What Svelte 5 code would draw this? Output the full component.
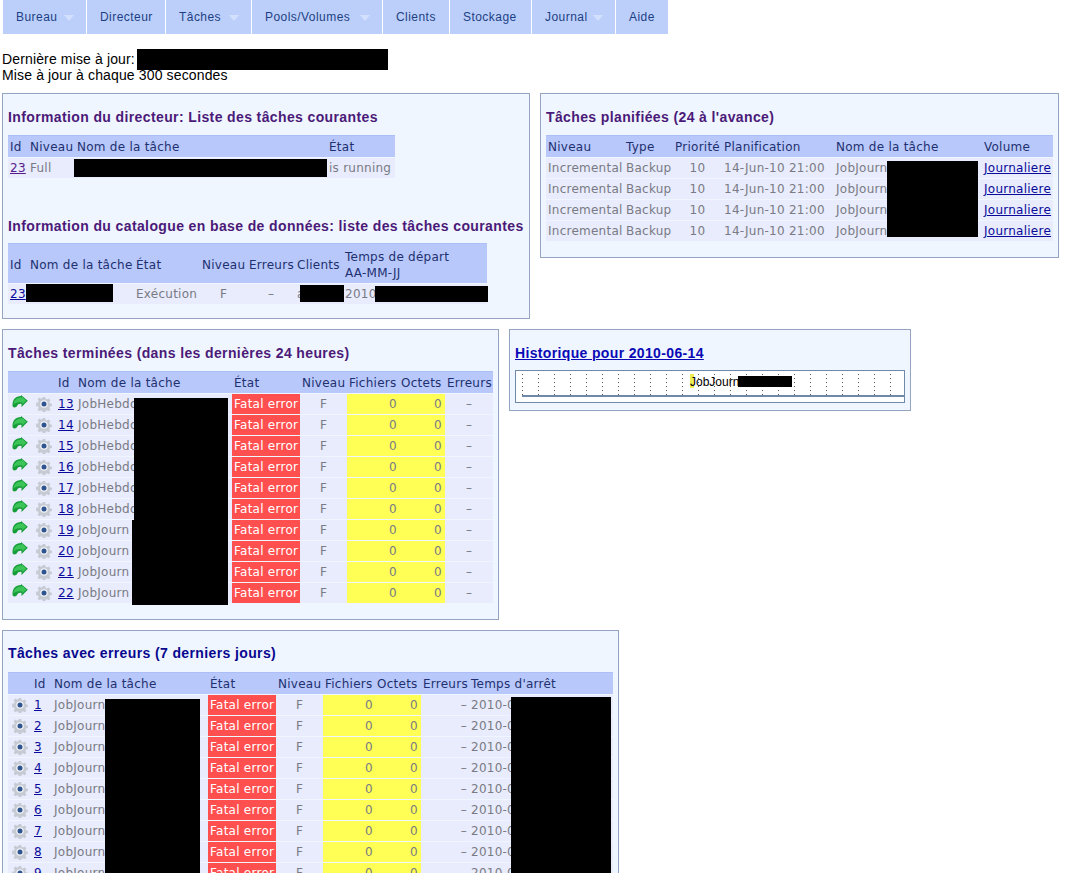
<script>
  const menu = [
    { label: 'Bureau', arrow: true, w: 84 },
    { label: 'Directeur', w: 79 },
    { label: 'Tâches', arrow: true, w: 86 },
    { label: 'Pools/Volumes', arrow: true, w: 131 },
    { label: 'Clients', w: 67 },
    { label: 'Stockage', w: 82 },
    { label: 'Journal', arrow: true, w: 84 },
    { label: 'Aide', w: 53 }
  ];

  const planned = [1, 2, 3, 4];
  const finished = [
    [13, 'JobHebdo'], [14, 'JobHebdo'], [15, 'JobHebdo'], [16, 'JobHebdo'], [17, 'JobHebdo'],
    [18, 'JobHebdo'], [19, 'JobJourn'], [20, 'JobJourn'], [21, 'JobJourn'], [22, 'JobJourn']
  ];
  const errors = [1, 2, 3, 4, 5, 6, 7, 8, 9];
  const ticks = Array.from({ length: 24 }, (_, i) => i);
</script>

{#snippet rerun()}
  <svg class="icon" viewBox="0 0 16 13" width="16" height="13" aria-hidden="true">
    <path d="M.5 10.500C.5 4.500 3.500 1 9 1V0l6.800 5.800L9.500 12V9C7.500 8.500 6 9.200 5.200 10.800 4 13.200.5 13 .5 10.500z" fill="#169c38"/>
    <path d="M1.500 9.500C2 5 4.500 2.500 10 2.500V1.500l4.300 4.200-4 3.600V7.500C7 6.800 4 7 1.500 9.500z" fill="#3cc458"/>
  </svg>
{/snippet}

{#snippet gear()}
  <svg class="icon gear" viewBox="0 0 16 16" width="16" height="16" aria-hidden="true">
    <path d="M6.800 1h2.400l.4 2 1.400.6 1.700-1.100 1.700 1.700-1.100 1.700.6 1.400 2 .4v2.400l-2 .4-.6 1.400 1.100 1.700-1.700 1.700-1.700-1.100-1.400.6-.4 2H6.800l-.4-2-1.400-.6-1.700 1.100-1.700-1.700 1.100-1.700-.6-1.400-2-.4V6.800l2-.4.6-1.400-1.100-1.700 1.700-1.700 1.700 1.100 1.400-.6z" fill="#c6cad2"/>
    <circle cx="8" cy="8" r="3.800" fill="#f0f2f6"/>
    <circle cx="8" cy="8" r="2.500" fill="#2f5590"/>
  </svg>
{/snippet}

<div class="page">
  <nav class="menu">
    {#each menu as item}
      <a href="#top" class="menu-item" style="width: {item.w}px">
        {item.label}
        {#if item.arrow}<span class="arrow"></span>{/if}
      </a>
    {/each}
  </nav>

  <p class="status">
    Dernière mise à jour:<br />
    Mise à jour à chaque 300 secondes
    <span class="mask status-mask"></span>
  </p>

  <div class="row">
    <section class="box box-director">
      <h3>Information du directeur: Liste des tâches courantes</h3>
      <table style="width: 387px">
        <colgroup><col style="width: 20px" /><col style="width: 47px" /><col style="width: 252px" /><col style="width: 68px" /></colgroup>
        <thead><tr><th>Id</th><th>Niveau</th><th>Nom de la tâche</th><th>État</th></tr></thead>
        <tbody><tr><td><a class="visited" href="#top">23</a></td><td>Full</td><td></td><td>is running</td></tr></tbody>
      </table>
      <h3 class="second">Information du catalogue en base de données: liste des tâches courantes</h3>
      <table style="width: 479px">
        <colgroup><col style="width: 20px" /><col style="width: 106px" /><col style="width: 66px" /><col style="width: 47px" /><col style="width: 48px" /><col style="width: 48px" /><col style="width: 144px" /></colgroup>
        <thead>
          <tr class="tall"><th>Id</th><th>Nom de la tâche</th><th>État</th><th>Niveau</th><th>Erreurs</th><th>Clients</th><th>Temps de départ<br />AA-MM-JJ</th></tr>
        </thead>
        <tbody>
          <tr><td><a href="#top">23</a></td><td></td><td>Exécution</td><td class="c">F</td><td class="c">–</td><td>a</td><td>2010</td></tr>
        </tbody>
      </table>
      <span class="mask" style="left: 71px; top: 65px; width: 253px; height: 18px"></span>
      <span class="mask" style="left: 23px; top: 190px; width: 87px; height: 18px"></span>
      <span class="mask" style="left: 297px; top: 191px; width: 44px; height: 17px"></span>
      <span class="mask" style="left: 372px; top: 192px; width: 113px; height: 16px"></span>
    </section>

    <section class="box box-planned">
      <h3>Tâches planifiées (24 à l'avance)</h3>
      <table style="width: 507px">
        <colgroup><col style="width: 78px" /><col style="width: 49px" /><col style="width: 49px" /><col style="width: 112px" /><col style="width: 148px" /><col style="width: 71px" /></colgroup>
        <thead><tr><th>Niveau</th><th>Type</th><th>Priorité</th><th>Planification</th><th>Nom de la tâche</th><th>Volume</th></tr></thead>
        <tbody>
          {#each planned as _}
            <tr><td>Incremental</td><td>Backup</td><td class="c">10</td><td>14-Jun-10 21:00</td><td>JobJourn</td><td><a href="#top">Journaliere</a></td></tr>
          {/each}
        </tbody>
      </table>
      <span class="mask" style="left: 346px; top: 67px; width: 91px; height: 76px"></span>
    </section>
  </div>

  <div class="row">
    <section class="box box-finished">
      <h3>Tâches terminées (dans les dernières 24 heures)</h3>
      <table style="width: 485px">
        <colgroup><col style="width: 24px" /><col style="width: 24px" /><col style="width: 20px" /><col style="width: 156px" /><col style="width: 68px" /><col style="width: 47px" /><col style="width: 52px" /><col style="width: 46px" /><col style="width: 48px" /></colgroup>
        <thead><tr><th></th><th></th><th>Id</th><th>Nom de la tâche</th><th>État</th><th>Niveau</th><th>Fichiers</th><th>Octets</th><th>Erreurs</th></tr></thead>
        <tbody>
          {#each finished as [id, name]}
            <tr>
              <td class="ic">{@render rerun()}</td>
              <td class="ic">{@render gear()}</td>
              <td><a href="#top">{id}</a></td>
              <td>{name}</td>
              <td class="fatal">Fatal error</td>
              <td class="c">F</td>
              <td class="warn">0</td>
              <td class="warn oct">0</td>
              <td class="c">–</td>
            </tr>
          {/each}
        </tbody>
      </table>
      <span class="mask" style="left: 131px; top: 68px; width: 94px; height: 122px"></span>
      <span class="mask" style="left: 129px; top: 190px; width: 96px; height: 85px"></span>
    </section>

    <section class="box box-history">
      <h3><a href="#top">Historique pour 2010-06-14</a></h3>
      <div class="chart">
        <div class="ticks">
          {#each ticks as t}<i class="tick"></i>{/each}
        </div>
        <span class="bar"></span>
        <span class="bar-label">JobJourn</span>
        <span class="mask" style="left: 222px; top: 5px; width: 54px; height: 11px"></span>
      </div>
    </section>
  </div>

  <div class="row">
    <section class="box box-errors">
      <h3 class="blue">Tâches avec erreurs (7 derniers jours)</h3>
      <table style="width: 605px">
        <colgroup><col style="width: 24px" /><col style="width: 20px" /><col style="width: 156px" /><col style="width: 68px" /><col style="width: 47px" /><col style="width: 52px" /><col style="width: 46px" /><col style="width: 48px" /><col style="width: 144px" /></colgroup>
        <thead><tr><th></th><th>Id</th><th>Nom de la tâche</th><th>État</th><th>Niveau</th><th>Fichiers</th><th>Octets</th><th>Erreurs</th><th>Temps d'arrêt</th></tr></thead>
        <tbody>
          {#each errors as id}
            <tr>
              <td class="ic">{@render gear()}</td>
              <td><a href="#top">{id}</a></td>
              <td>JobJourn</td>
              <td class="fatal">Fatal error</td>
              <td class="c">F</td>
              <td class="warn">0</td>
              <td class="warn oct">0</td>
              <td class="r">–</td>
              <td>2010-0</td>
            </tr>
          {/each}
        </tbody>
      </table>
      <span class="mask" style="left: 102px; top: 68px; width: 95px; height: 180px"></span>
      <span class="mask" style="left: 508px; top: 66px; width: 100px; height: 182px"></span>
    </section>
  </div>
</div>

<style>
  :global(body) {
    background: #fff;
    overflow: hidden;
  }

  .page {
    height: 873px;
    overflow: hidden;
    font-family: "DejaVu Sans", sans-serif;
    font-size: 12px;
    color: #000;
  }

  .menu {
    display: flex;
    margin-left: 3px;
    height: 34px;
  }

  .menu-item {
    position: relative;
    box-sizing: border-box;
    height: 34px;
    line-height: 35px;
    padding-left: 13px;
    background: #bccffb;
    border-right: 1px solid #fff;
    color: #1d3f83;
    font-family: "Liberation Sans", sans-serif;
    font-size: 12px;
    letter-spacing: 0.45px;
    text-decoration: none;
  }

  .arrow {
    position: absolute;
    right: 12px;
    top: 15px;
    border: 5px solid transparent;
    border-top: 6px solid #d3e0fd;
    border-bottom: 0;
  }

  .status {
    position: relative;
    margin: 17px 0 11px 2px;
    font-family: "Liberation Sans", sans-serif;
    font-size: 14px;
    letter-spacing: 0.14px;
    line-height: 16px;
    height: 31px;
  }

  .status-mask {
    left: 135px;
    top: -2px;
    width: 251px;
    height: 21px;
  }

  .row {
    display: flex;
    align-items: flex-start;
    gap: 10px;
    margin: 0 0 10px 2px;
  }

  .box {
    position: relative;
    box-sizing: border-box;
    padding: 0 5px 5px;
    background: #f0f6ff;
    border: 1px solid #95a4c0;
  }

  .box-director { width: 528px; height: 226px; }
  .box-planned { width: 519px; height: 165px; }
  .box-finished { width: 497px; height: 291px; }
  .box-history { width: 402px; height: 82px; }
  .box-errors { width: 617px; height: 400px; }

  h3 {
    margin: 0;
    height: 40px;
    line-height: 46px;
    font-family: "Liberation Sans", sans-serif;
    font-size: 14px;
    font-weight: bold;
    letter-spacing: 0.38px;
    color: #4b1a78;
    white-space: nowrap;
  }

  h3.second {
    height: 63px;
    line-height: 94px;
  }

  h3.blue {
    line-height: 45px;
    color: #08088f;
  }

  h3 a {
    color: #0a0ab5;
    letter-spacing: 0.35px;
  }

  table {
    table-layout: fixed;
    border-collapse: separate;
    border-spacing: 0 1px;
  }

  th,
  td {
    padding: 0 2px;
    white-space: nowrap;
    text-align: left;
    font-size: 12px;
    font-weight: normal;
    height: 20px;
    letter-spacing: 0.25px;
  }

  th {
    height: 20px;
    padding-top: 1px;
    background: #b8c8fa;
    color: #1e3070;
    border-top: 1px solid #adbef6;
  }

  .tall th {
    height: 37px;
    padding-top: 2px;
    line-height: 16px;
  }

  td {
    overflow: hidden;
    background: #e8ecfc;
    color: #7a7a84;
  }

  td a {
    color: #0a0a9a;
  }

  td a.visited {
    color: #551a8b;
  }

  .c {
    text-align: center;
  }

  .r {
    text-align: right;
  }

  .ic {
    padding: 0 0 0 4px;
    line-height: 0;
    vertical-align: top;
  }

  .icon {
    display: block;
    margin-top: 1px;
  }

  .gear {
    margin-top: 2px;
  }

  .fatal {
    background: #ff4f4f;
    color: #fff;
  }

  .warn {
    background: #ffff55;
    text-align: right;
    padding-right: 2px;
  }

  .warn.oct {
    padding-right: 3px;
  }

  .mask {
    position: absolute;
    background: #000;
  }

  .chart {
    position: relative;
    box-sizing: border-box;
    width: 390px;
    height: 33px;
    background: #fff;
    border: 1px solid #6e8aa8;
    font-family: "Liberation Sans", sans-serif;
    font-size: 12px;
  }

  .ticks {
    display: flex;
    gap: 15px;
    height: 21px;
    margin: 3px 0 0 6px;
    border-bottom: 2px solid #6e8aa8;
  }

  .tick {
    width: 1px;
    height: 21px;
    background: repeating-linear-gradient(to bottom, #555 0 1px, transparent 1px 4px);
  }

  .bar {
    position: absolute;
    left: 174px;
    top: 3px;
    width: 4px;
    height: 14px;
    background: #eeee55;
  }

  .bar-label {
    position: absolute;
    left: 174px;
    top: 4px;
    line-height: 14px;
  }
</style>
